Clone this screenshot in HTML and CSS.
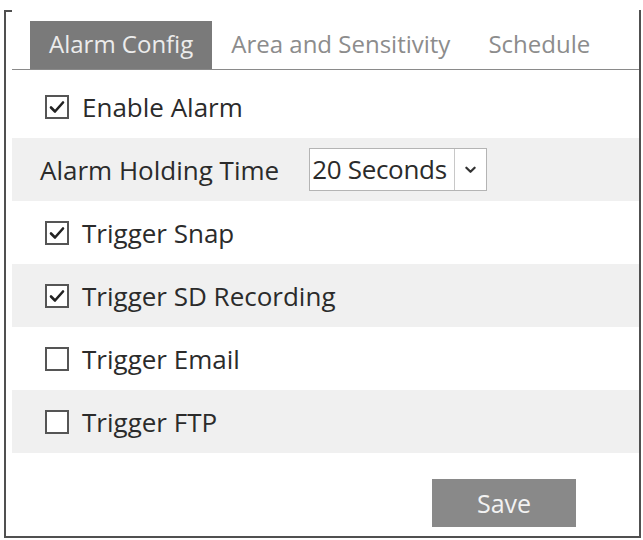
FILE: index.html
```html
<!DOCTYPE html>
<html>
<head>
<meta charset="utf-8">
<link rel="stylesheet" href="styles.css">
</head>
<body>
<div class="panel">
  <div class="tabs">
    <div class="tab active">Alarm Config</div>
    <div class="tab">Area and Sensitivity</div>
    <div class="tab">Schedule</div>
  </div>
  <div class="rows">
    <div class="row">
      <span class="cb"><svg viewBox="0 0 24 24" width="24" height="24"><rect x="1" y="1" width="22" height="22" fill="#fff" stroke="#555" stroke-width="2"/><path d="M6 12.5 L10 16.5 L18 7.5" fill="none" stroke="#222" stroke-width="2.6" stroke-linecap="round" stroke-linejoin="round"/></svg></span>
      <span class="text">Enable Alarm</span>
    </div>
    <div class="row alt field">
      <span class="text">Alarm Holding Time</span>
      <div class="select">
        <span class="value">20 Seconds</span>
        <span class="arrow"><svg viewBox="0 0 12 8" width="11" height="8"><path d="M1.5 1.5 L6 6 L10.5 1.5" fill="none" stroke="#333" stroke-width="2.4" stroke-linecap="round" stroke-linejoin="round"/></svg></span>
      </div>
    </div>
    <div class="row">
      <span class="cb"><svg viewBox="0 0 24 24" width="24" height="24"><rect x="1" y="1" width="22" height="22" fill="#fff" stroke="#555" stroke-width="2"/><path d="M6 12.5 L10 16.5 L18 7.5" fill="none" stroke="#222" stroke-width="2.6" stroke-linecap="round" stroke-linejoin="round"/></svg></span>
      <span class="text">Trigger Snap</span>
    </div>
    <div class="row alt">
      <span class="cb"><svg viewBox="0 0 24 24" width="24" height="24"><rect x="1" y="1" width="22" height="22" fill="#fff" stroke="#555" stroke-width="2"/><path d="M6 12.5 L10 16.5 L18 7.5" fill="none" stroke="#222" stroke-width="2.6" stroke-linecap="round" stroke-linejoin="round"/></svg></span>
      <span class="text">Trigger SD Recording</span>
    </div>
    <div class="row">
      <span class="cb"><svg viewBox="0 0 24 24" width="24" height="24"><rect x="1" y="1" width="22" height="22" fill="#fff" stroke="#555" stroke-width="2"/></svg></span>
      <span class="text">Trigger Email</span>
    </div>
    <div class="row alt">
      <span class="cb"><svg viewBox="0 0 24 24" width="24" height="24"><rect x="1" y="1" width="22" height="22" fill="#fff" stroke="#555" stroke-width="2"/></svg></span>
      <span class="text">Trigger FTP</span>
    </div>
  </div>
  <div class="footer">
    <button class="save">Save</button>
  </div>
</div>
</body>
</html>
```

FILE: styles.css
```css
html, body {
  margin: 0;
  padding: 0;
  background: #fff;
}
body {
  font-family: "Open Sans", "Noto Sans", sans-serif;
  color: #2b2b2b;
}
.panel {
  position: relative;
  box-sizing: border-box;
  margin: 10px 0 0 4px;
  width: 637px;
  height: 528px;
  border: 2px solid #505050;
  border-top: 0;
  padding-left: 6px;
  display: flex;
  flex-direction: column;
}
.panel::before {
  content: "";
  position: absolute;
  top: 0;
  left: -2px;
  width: 8px;
  height: 2px;
  background: #505050;
}
.tabs {
  display: flex;
  padding: 11px 0 0 18px;
  border-bottom: 1px solid #8a8a8a;
}
.tab {
  height: 48px;
  line-height: 46px;
  padding: 0 19px;
  font-size: 24px;
  color: #8c8c8c;
}
.tab.active {
  background: #7a7a7a;
  color: #ececec;
}
.rows {
  padding-top: 5px;
  display: flex;
  flex-direction: column;
}
.row {
  height: 63px;
  display: flex;
  align-items: center;
  padding-left: 33px;
  font-size: 26px;
}
.row.alt {
  background: #f0f0f0;
}
.row.field {
  padding-left: 28px;
}
.cb {
  width: 24px;
  height: 24px;
  display: flex;
  margin-right: 13px;
}
.select {
  margin-left: 30px;
  height: 43px;
  display: flex;
  background: #fff;
  border: 1px solid #b4b4b4;
  box-sizing: border-box;
}
.value {
  width: 144px;
  padding-left: 2px;
  box-sizing: border-box;
  line-height: 41px;
  font-size: 26px;
  white-space: nowrap;
  overflow: hidden;
  letter-spacing: -0.3px;
}
.arrow {
  width: 31px;
  border-left: 1px solid #c8c8c8;
  display: flex;
  align-items: center;
  justify-content: center;
}
.footer {
  display: flex;
  justify-content: flex-end;
  padding: 26px 63px 0 0;
}
.save {
  width: 144px;
  height: 48px;
  border: 0;
  background: #898989;
  color: #f2f2f2;
  font-family: "Open Sans", "Noto Sans", sans-serif;
  font-size: 25px;
  padding: 0;
}
```
